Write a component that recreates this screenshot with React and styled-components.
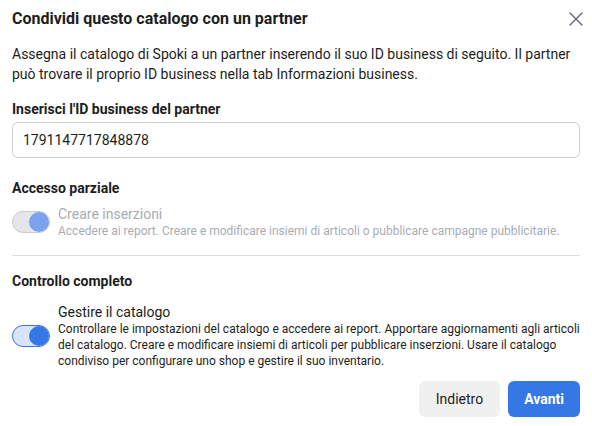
import React from "react";
import styled, { createGlobalStyle } from "styled-components";

const Global = createGlobalStyle`
  html, body { margin: 0; padding: 0; background: #fff; }
  body { font-family: Roboto, "Liberation Sans", Arial, sans-serif; color: #1c1e21; -webkit-font-smoothing: antialiased; }
  * { box-sizing: border-box; }
`;

const Dialog = styled.div`
  width: 592px;
  height: 426px;
  padding: 8px 12px 9px 12px;
  display: flex;
  flex-direction: column;
`;

const Header = styled.div`
  display: flex;
  align-items: center;
  justify-content: space-between;
  height: 22px;
`;

const Title = styled.h1`
  margin: 0;
  font-size: 16px;
  line-height: 20px;
  font-weight: 700;
  color: #1c1e21;
`;

const Close = styled.button`
  border: 0;
  background: none;
  padding: 0;
  width: 16px;
  height: 16px;
  margin-right: -4px;
  display: flex;
  align-items: center;
  justify-content: center;
  cursor: pointer;
`;

const Desc = styled.p`
  margin: 14px 0 0 0;
  font-size: 14px;
  line-height: 20px;
  color: #1c1e21;
`;

const Label = styled.div`
  margin-top: ${(p) => p.$mt}px;
  font-size: 14px;
  line-height: 18px;
  font-weight: 700;
  color: #1c1e21;
`;

const Input = styled.input`
  margin-top: 4px;
  width: 100%;
  height: 36px;
  border: 1px solid #ccd0d5;
  border-radius: 6px;
  padding: 0 10px;
  font-family: inherit;
  font-size: 14px;
  color: #1c1e21;
  outline: none;
`;

const OptionRow = styled.div`
  margin-top: ${(p) => p.$mt}px;
  display: flex;
  align-items: center;
  gap: 8px;
`;

const Track = styled.span`
  flex: none;
  position: relative;
  width: 38px;
  height: 22px;
  border-radius: 11px;
  border: 1px solid ${(p) => (p.$disabled ? "#c9ccd1" : "#3578e5")};
  background: ${(p) => (p.$disabled ? "#e4e6eb" : "#d8e4fa")};
`;

const Knob = styled.span`
  position: absolute;
  right: 0px;
  top: 0px;
  width: 20px;
  height: 20px;
  border-radius: 50%;
  background: ${(p) => (p.$disabled ? "#7aa2ef" : "#3578e5")};
`;

const OptionText = styled.div`
  display: flex;
  flex-direction: column;
`;

const OptionTitle = styled.div`
  font-size: 14px;
  line-height: 18px;
  color: ${(p) => (p.$disabled ? "#a8acb3" : "#1c1e21")};
`;

const OptionDesc = styled.div`
  font-size: 12px;
  line-height: 16px;
  color: ${(p) => (p.$disabled ? "#a8acb3" : "#1c1e21")};
`;

const Divider = styled.hr`
  margin: 16px 0 0 0;
  border: 0;
  border-top: 1px solid #dadde1;
`;

const Footer = styled.div`
  margin-top: auto;
  display: flex;
  justify-content: flex-end;
  gap: 8px;
`;

const Button = styled.button`
  height: 36px;
  padding: 0 ${(p) => (p.$primary ? 16 : 17)}px;
  border: 0;
  border-radius: 6px;
  font-family: inherit;
  font-size: 14px;
  font-weight: ${(p) => (p.$primary ? 700 : 400)};
  background: ${(p) => (p.$primary ? "#3578e5" : "#f0f0f0")};
  color: ${(p) => (p.$primary ? "#fff" : "#1c1e21")};
  cursor: pointer;
`;

const Toggle = ({ disabled }) => (
  <Track $disabled={disabled}>
    <Knob $disabled={disabled} />
  </Track>
);

export default function App() {
  return (
    <>
      <Global />
      <Dialog>
        <Header>
          <Title>Condividi questo catalogo con un partner</Title>
          <Close aria-label="Chiudi">
            <svg width="14" height="14" viewBox="0 0 14 14">
              <path d="M1 1 L13 13 M13 1 L1 13" stroke="#606770" strokeWidth="1.4" strokeLinecap="round" />
            </svg>
          </Close>
        </Header>
        <Desc>
          Assegna il catalogo di Spoki a un partner inserendo il suo ID business di seguito. Il partner
          può trovare il proprio ID business nella tab Informazioni business.
        </Desc>
        <Label $mt={16}>Inserisci l'ID business del partner</Label>
        <Input defaultValue="1791147717848878" />
        <Label $mt={21}>Accesso parziale</Label>
        <OptionRow $mt={8}>
          <Toggle disabled />
          <OptionText>
            <OptionTitle $disabled>Creare inserzioni</OptionTitle>
            <OptionDesc $disabled>
              Accedere ai report. Creare e modificare insiemi di articoli o pubblicare campagne pubblicitarie.
            </OptionDesc>
          </OptionText>
        </OptionRow>
        <Divider />
        <Label $mt={16}>Controllo completo</Label>
        <OptionRow $mt={13}>
          <Toggle />
          <OptionText>
            <OptionTitle>Gestire il catalogo</OptionTitle>
            <OptionDesc>
              Controllare le impostazioni del catalogo e accedere ai report. Apportare aggiornamenti agli articoli
              del catalogo. Creare e modificare insiemi di articoli per pubblicare inserzioni. Usare il catalogo
              condiviso per configurare uno shop e gestire il suo inventario.
            </OptionDesc>
          </OptionText>
        </OptionRow>
        <Footer>
          <Button>Indietro</Button>
          <Button $primary>Avanti</Button>
        </Footer>
      </Dialog>
    </>
  );
}
